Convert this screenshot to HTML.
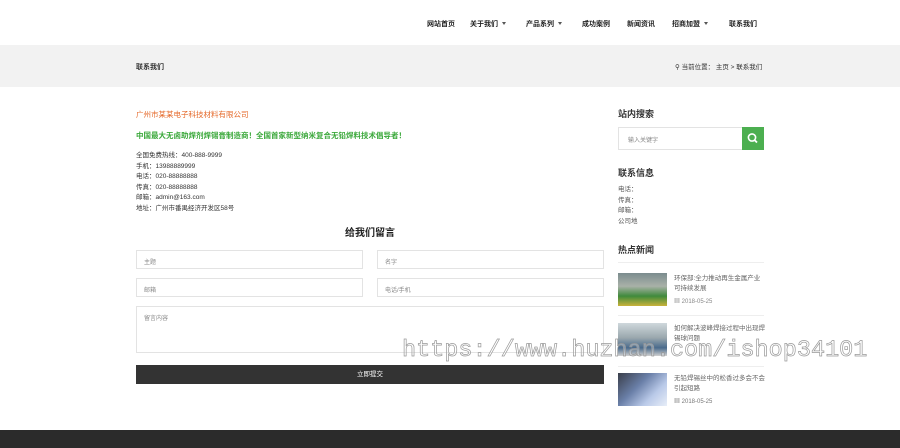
<!DOCTYPE html>
<html><head><meta charset="utf-8"><style>
*{margin:0;padding:0;box-sizing:border-box}
body{width:900px;height:448px;overflow:hidden;background:#fff;font-family:"Liberation Sans","Noto Sans CJK SC",sans-serif;color:#333;position:relative}
.a{position:absolute;white-space:nowrap}
.nav{font-size:7px;font-weight:bold;color:#222;top:19px}
.tri{display:inline-block;border:2px solid transparent;border-top:3px solid #555;margin-left:4px;vertical-align:middle}
.inp{position:absolute;border:1px solid #e3e3e3;font-size:6px;color:#888;padding:6px 7px}
.small{font-size:6.5px;color:#333;line-height:10.5px}
.h{font-size:9px;font-weight:bold;color:#333}
.ni{position:absolute;left:618px;width:146px}
.ni .img{position:absolute;left:0;top:0;width:49px;height:33px}
.ni .t{position:absolute;left:56px;top:1px;font-size:6.5px;color:#666;line-height:10px;width:92px;white-space:normal}
.ni .d{position:absolute;left:56px;top:23px;font-size:6px;color:#777}
</style></head><body>
<div class="a nav" style="left:427px">网站首页</div>
<div class="a nav" style="left:470px">关于我们<span class="tri"></span></div>
<div class="a nav" style="left:526px">产品系列<span class="tri"></span></div>
<div class="a nav" style="left:582px">成功案例</div>
<div class="a nav" style="left:627px">新闻资讯</div>
<div class="a nav" style="left:672px">招商加盟<span class="tri"></span></div>
<div class="a nav" style="left:729px">联系我们</div>

<div class="a" style="left:0;top:45px;width:900px;height:42px;background:#f2f2f2"></div>
<div class="a" style="left:136px;top:62px;font-size:7px;font-weight:bold;color:#333">联系我们</div>
<div class="a" style="left:675px;top:61px;font-size:6.5px;color:#333">⚲ 当前位置： 主页 &gt; 联系我们</div>

<div class="a" style="left:136px;top:109px;font-size:7.5px;color:#e5692a">广州市某某电子科技材料有限公司</div>
<div class="a" style="left:136px;top:130px;font-size:7.5px;color:#3aa83a;font-weight:bold">中国最大无卤助焊剂焊锡膏制造商！全国首家新型纳米复合无铅焊料技术倡导者！</div>
<div class="a small" style="left:136px;top:151px">全国免费热线：400-888-9999<br>手机：13988889999<br>电话：020-88888888<br>传真：020-88888888<br>邮箱：admin@163.com<br>地址：广州市番禺经济开发区58号</div>

<div class="a" style="left:0;width:740px;text-align:center;top:224px;font-size:10px;font-weight:bold;color:#222">给我们留言</div>
<div class="inp" style="left:136px;top:250px;width:227px;height:19px">主题</div>
<div class="inp" style="left:377px;top:250px;width:227px;height:19px">名字</div>
<div class="inp" style="left:136px;top:278px;width:227px;height:19px">邮箱</div>
<div class="inp" style="left:377px;top:278px;width:227px;height:19px">电话/手机</div>
<div class="inp" style="left:136px;top:306px;width:468px;height:47px">留言内容</div>
<div class="a" style="left:136px;top:365px;width:468px;height:19px;background:#333;color:#fff;font-size:6.5px;text-align:center;line-height:19px">立即提交</div>

<div class="a h" style="left:618px;top:107px">站内搜索</div>
<div class="inp" style="left:618px;top:127px;width:125px;height:23px;padding:7px 9px">输入关键字</div>
<div class="a" style="left:742px;top:127px;width:22px;height:23px;background:#4caf50"><svg width="22" height="23"><circle cx="10" cy="10.5" r="3.6" fill="none" stroke="#fff" stroke-width="1.6"/><path d="M12.6 13.1 15 15.5" stroke="#fff" stroke-width="1.8"/></svg></div>
<div class="a h" style="left:618px;top:166px">联系信息</div>
<div class="a small" style="left:618px;top:185px;color:#555">电话：<br>传真：<br>邮箱：<br>公司地</div>
<div class="a h" style="left:618px;top:243px">热点新闻</div>
<div class="a" style="left:618px;top:262px;width:146px;border-top:1px solid #eee"></div>
<div class="ni" style="top:273px"><div class="img" style="background:linear-gradient(180deg,#7b8c8e 0,#a9b1a8 40%,#3f8a3c 70%,#c9b23a 100%)"></div><div class="t">环保部:全力推动再生金属产业可持续发展</div><div class="d" style="color:#888">▦ 2018-05-25</div></div>
<div class="a" style="left:618px;top:315px;width:146px;border-top:1px solid #eee"></div>
<div class="ni" style="top:323px"><div class="img" style="background:linear-gradient(180deg,#cfd8dc 0,#9aa7ad 45%,#4a6b8c 75%,#d0d0d0 100%)"></div><div class="t">如何解决波峰焊接过程中出现焊锡球问题</div></div>
<div class="a" style="left:618px;top:366px;width:146px;border-top:1px solid #eee"></div>
<div class="ni" style="top:373px"><div class="img" style="background:linear-gradient(135deg,#3a3f4a 0,#6a7fa8 40%,#b9c9e8 70%,#e8eef8 100%)"></div><div class="t">无铅焊锡丝中的松香过多会不会引起短路</div><div class="d">▦ 2018-05-25</div></div>

<div class="a" style="left:402px;top:337px;font-family:'Liberation Mono',monospace;font-size:23.5px;color:rgba(255,255,255,.3);-webkit-text-stroke:0.7px #999">https://www.huzhan.com/ishop34101</div>

<div class="a" style="left:0;top:430px;width:900px;height:18px;background:#2b2b2b"></div>
</body></html>
